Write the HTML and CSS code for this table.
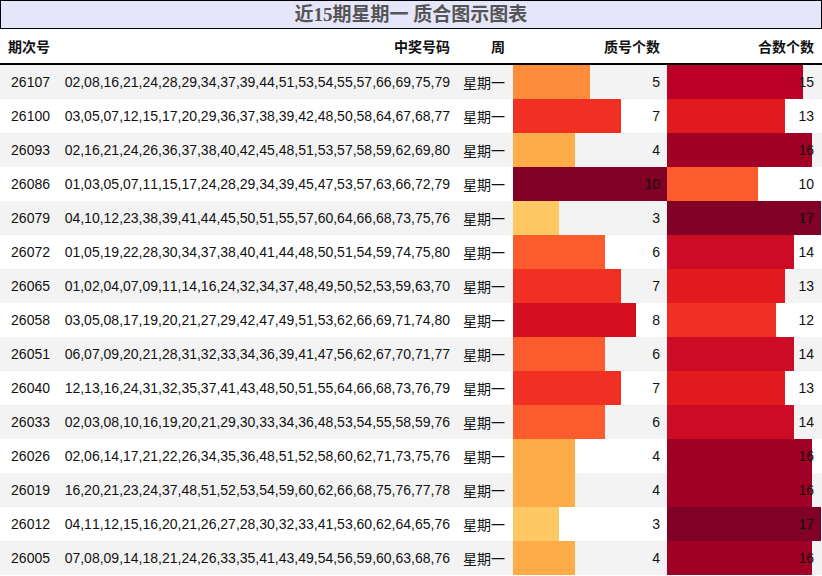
FILE: index.html
```html
<!DOCTYPE html>
<html lang="zh">
<head>
<meta charset="utf-8">
<link rel="stylesheet" href="styles.css">
</head>
<body>
<div class="chart">
  <div class="title">近15期星期一 质合图示图表</div>
  <div class="row head">
    <div class="c left">期次号</div>
    <div class="c">中奖号码</div>
    <div class="c">周</div>
    <div class="c">质号个数</div>
    <div class="c">合数个数</div>
  </div>
  <div class="row"><div class="c">26107</div><div class="c">02,08,16,21,24,28,29,34,37,39,44,51,53,54,55,57,66,69,75,79</div><div class="c">星期一</div><div class="c bar" style="--w:50%;--c:#fd8d3c">5</div><div class="c bar" style="--w:87.67%;--c:#bb0028">15</div></div>
  <div class="row"><div class="c">26100</div><div class="c">03,05,07,12,15,17,20,29,36,37,38,39,42,48,50,58,64,67,68,77</div><div class="c">星期一</div><div class="c bar" style="--w:70%;--c:#ef3023">7</div><div class="c bar" style="--w:75.98%;--c:#e01a1d">13</div></div>
  <div class="row"><div class="c">26093</div><div class="c">02,16,21,24,26,36,37,38,40,42,45,48,51,53,57,58,59,62,69,80</div><div class="c">星期一</div><div class="c bar" style="--w:40%;--c:#feab49">4</div><div class="c bar" style="--w:93.51%;--c:#a00026">16</div></div>
  <div class="row"><div class="c">26086</div><div class="c">01,03,05,07,11,15,17,24,28,29,34,39,45,47,53,57,63,66,72,79</div><div class="c">星期一</div><div class="c bar" style="--w:100%;--c:#800026">10</div><div class="c bar" style="--w:58.44%;--c:#fc5b2e">10</div></div>
  <div class="row"><div class="c">26079</div><div class="c">04,10,12,23,38,39,41,44,45,50,51,55,57,60,64,66,68,73,75,76</div><div class="c">星期一</div><div class="c bar" style="--w:30%;--c:#fec965">3</div><div class="c bar" style="--w:99.36%;--c:#800026">17</div></div>
  <div class="row"><div class="c">26072</div><div class="c">01,05,19,22,28,30,34,37,38,40,41,44,48,50,51,54,59,74,75,80</div><div class="c">星期一</div><div class="c bar" style="--w:60%;--c:#fc5b2e">6</div><div class="c bar" style="--w:81.82%;--c:#cb0c24">14</div></div>
  <div class="row"><div class="c">26065</div><div class="c">01,02,04,07,09,11,14,16,24,32,34,37,48,49,50,52,53,59,63,70</div><div class="c">星期一</div><div class="c bar" style="--w:70%;--c:#ef3023">7</div><div class="c bar" style="--w:75.98%;--c:#e01a1d">13</div></div>
  <div class="row"><div class="c">26058</div><div class="c">03,05,08,17,19,20,21,27,29,42,47,49,51,53,62,66,69,71,74,80</div><div class="c">星期一</div><div class="c bar" style="--w:80%;--c:#d41020">8</div><div class="c bar" style="--w:70.13%;--c:#ef3023">12</div></div>
  <div class="row"><div class="c">26051</div><div class="c">06,07,09,20,21,28,31,32,33,34,36,39,41,47,56,62,67,70,71,77</div><div class="c">星期一</div><div class="c bar" style="--w:60%;--c:#fc5b2e">6</div><div class="c bar" style="--w:81.82%;--c:#cb0c24">14</div></div>
  <div class="row"><div class="c">26040</div><div class="c">12,13,16,24,31,32,35,37,41,43,48,50,51,55,64,66,68,73,76,79</div><div class="c">星期一</div><div class="c bar" style="--w:70%;--c:#ef3023">7</div><div class="c bar" style="--w:75.98%;--c:#e01a1d">13</div></div>
  <div class="row"><div class="c">26033</div><div class="c">02,03,08,10,16,19,20,21,29,30,33,34,36,48,53,54,55,58,59,76</div><div class="c">星期一</div><div class="c bar" style="--w:60%;--c:#fc5b2e">6</div><div class="c bar" style="--w:81.82%;--c:#cb0c24">14</div></div>
  <div class="row"><div class="c">26026</div><div class="c">02,06,14,17,21,22,26,34,35,36,48,51,52,58,60,62,71,73,75,76</div><div class="c">星期一</div><div class="c bar" style="--w:40%;--c:#feab49">4</div><div class="c bar" style="--w:93.51%;--c:#a00026">16</div></div>
  <div class="row"><div class="c">26019</div><div class="c">16,20,21,23,24,37,48,51,52,53,54,59,60,62,66,68,75,76,77,78</div><div class="c">星期一</div><div class="c bar" style="--w:40%;--c:#feab49">4</div><div class="c bar" style="--w:93.51%;--c:#a00026">16</div></div>
  <div class="row"><div class="c">26012</div><div class="c">04,11,12,15,16,20,21,26,27,28,30,32,33,41,53,60,62,64,65,76</div><div class="c">星期一</div><div class="c bar" style="--w:30%;--c:#fec965">3</div><div class="c bar" style="--w:99.36%;--c:#800026">17</div></div>
  <div class="row"><div class="c">26005</div><div class="c">07,08,09,14,18,21,24,26,33,35,41,43,49,54,56,59,60,63,68,76</div><div class="c">星期一</div><div class="c bar" style="--w:40%;--c:#feab49">4</div><div class="c bar" style="--w:93.51%;--c:#a00026">16</div></div>
</div>
</body>
</html>
```
FILE: styles.css
```css
html, body {
  margin: 0;
  padding: 0;
  background: #fff;
}
.chart {
  width: 822px;
  font-family: "Liberation Sans", "Noto Sans CJK SC", sans-serif;
  font-size: 14px;
  font-kerning: none;
  color: #111;
}
.title {
  height: 27px;
  border: 1px solid #000;
  background: #e6e6fa;
  color: #555;
  font-family: "Liberation Serif", "Noto Sans CJK SC", serif;
  font-weight: bold;
  font-size: 19px;
  line-height: 27px;
  text-align: center;
}
.row {
  display: grid;
  grid-template-columns: 58px 400px 55px 154px 155px;
  height: 34px;
}
.row:nth-child(odd) {
  background: #f3f3f3;
}
.row.head {
  background: #fff;
  border-bottom: 2px solid #000;
  font-weight: bold;
}
.c {
  display: flex;
  align-items: center;
  justify-content: flex-end;
  padding-right: 8px;
  white-space: nowrap;
}
.c:nth-child(4) {
  padding-right: 7px;
}
.c.left {
  justify-content: flex-start;
  padding-left: 8px;
}
.bar {
  background: linear-gradient(to right, var(--c) var(--w), transparent var(--w));
}
```
